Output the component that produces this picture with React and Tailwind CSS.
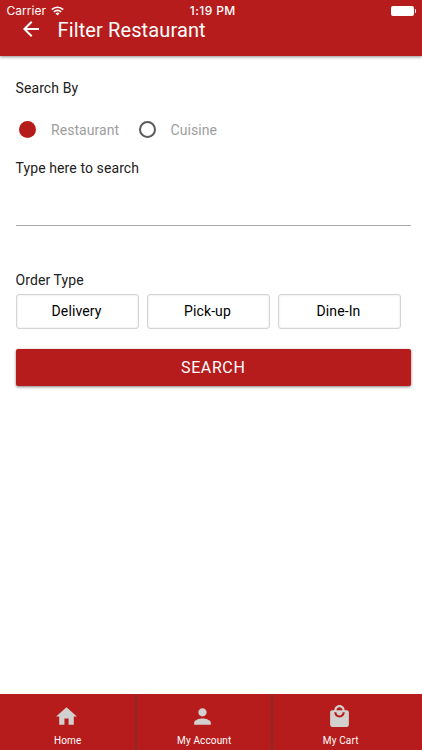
import { useState } from "react";
import { MdArrowBack, MdHome, MdPerson, MdLocalMall } from "react-icons/md";

const orderTypes = ["Delivery", "Pick-up", "Dine-In"];

const tabs = [
  { label: "Home", Icon: MdHome },
  { label: "My Account", Icon: MdPerson },
  { label: "My Cart", Icon: MdLocalMall },
];

function StatusBar() {
  return (
    <div className="grid grid-cols-3 items-center h-[22px] pl-[6.5px] pr-[6px] text-[12px] leading-[22px] font-['Inter',sans-serif]">
      <div className="flex items-center gap-[5px]">
        <span className="tracking-[0.05px]">Carrier</span>
        <svg width="13" height="10" viewBox="0 0 13 10" fill="none" stroke="white" strokeWidth="1.7">
          <path d="M0.8 3.6a8.1 8.1 0 0 1 11.4 0" />
          <path d="M2.9 5.8a5.1 5.1 0 0 1 7.2 0" />
          <path d="M6.5 9.4 4.5 7.4a2.9 2.9 0 0 1 4 0z" fill="white" stroke="none" />
        </svg>
      </div>
      <div className="ml-[3px] text-center font-medium tracking-[0.4px]">1:19 PM</div>
      <div className="flex items-center justify-end gap-px">
        <div className="w-[23px] h-[10px] rounded-[2px] bg-white"></div>
        <div className="w-[1.5px] h-[4px] rounded-r bg-white"></div>
      </div>
    </div>
  );
}

function Radio({ label, checked, onClick }) {
  return (
    <button className="flex items-center" onClick={onClick}>
      <span
        className={
          checked
            ? "w-[17px] h-[17px] rounded-full bg-[#b71c1c]"
            : "w-[17px] h-[17px] rounded-full border-2 border-[#5a5a5a]"
        }
      ></span>
      <span className="ml-[15px] text-[14px] leading-5 tracking-[0.05px] text-[#9e9e9e]">{label}</span>
    </button>
  );
}

export default function App() {
  const [searchBy, setSearchBy] = useState("Restaurant");
  const [query, setQuery] = useState("");

  return (
    <div className="flex flex-col w-full h-screen overflow-hidden bg-white text-[#212121] font-['Roboto',sans-serif]">
      <header className="h-14 shrink-0 bg-[#b71c1c] text-white shadow-[0_1px_3px_rgba(0,0,0,0.45)]">
        <StatusBar />
        <div className="flex items-center h-[15px] pl-[19px]">
          <MdArrowBack className="w-6 h-6 shrink-0 mb-[2px]" />
          <h1 className="ml-[14.5px] text-[20px] leading-6 tracking-[0.12px]">Filter Restaurant</h1>
        </div>
      </header>

      <main className="flex-1 pl-[15.5px] pr-[11px] pt-[22px] text-[14px] leading-5">
        <p className="tracking-[0.1px]">Search By</p>
        <div className="flex gap-[19.5px] mt-[21.5px] pl-[3.5px]">
          <Radio
            label="Restaurant"
            checked={searchBy === "Restaurant"}
            onClick={() => setSearchBy("Restaurant")}
          />
          <Radio
            label="Cuisine"
            checked={searchBy === "Cuisine"}
            onClick={() => setSearchBy("Cuisine")}
          />
        </div>
        <p className="mt-[18px] tracking-[0.1px]">Type here to search</p>
        <input
          type="text"
          value={query}
          onChange={(e) => setQuery(e.target.value)}
          className="block w-full h-12 border-b border-[#a8a8a8] outline-none"
        />

        <p className="mt-[44px] tracking-[0.1px]">Order Type</p>
        <div className="flex gap-2 mt-[4.5px]">
          {orderTypes.map((type) => (
            <button
              key={type}
              className="w-[123px] h-[35px] pb-px pr-px rounded-[3px] border border-[#d4d4d4] shadow-[inset_0_0_2px_rgba(0,0,0,0.15)] tracking-[0.1px] text-black"
            >
              {type}
            </button>
          ))}
        </div>

        <button className="block w-full h-[37px] mt-5 rounded-[2px] bg-[#b71c1c] text-white text-[16px] tracking-[0.6px] shadow-[0_1px_3px_rgba(0,0,0,0.5)]">
          SEARCH
        </button>
      </main>

      <nav className="flex h-14 shrink-0 bg-[#b71c1c] text-white">
        {tabs.map(({ label, Icon }) => (
          <div
            key={label}
            className="flex flex-col items-center w-[136.5px] pt-[9.5px] border-r-2 border-[#8c2a2a] last:border-transparent"
          >
            <Icon className="w-[25px] h-[25px] mr-[2px] text-[#d3d0d0]" />
            <span className="mt-[6.5px] ml-px text-[10px] leading-3 tracking-[0.15px]">{label}</span>
          </div>
        ))}
      </nav>
    </div>
  );
}
